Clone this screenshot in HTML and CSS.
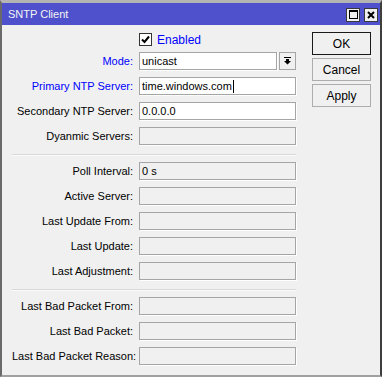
FILE: index.html
```html
<!DOCTYPE html>
<html lang="en">
<head>
  <meta charset="UTF-8" />
  <title>SNTP Client</title>
  <link rel="stylesheet" href="styles.css">
</head>
<body>
  <div class="window">
    <div class="titlebar">
      <span class="title">SNTP Client</span>
      <div class="title-buttons">
        <span class="tbtn">
          <svg width="9" height="9" viewBox="0 0 9 9"><rect x="0.5" y="0.5" width="8" height="8" fill="none" stroke="#000"/><rect x="0" y="0" width="9" height="2" fill="#000"/></svg>
        </span>
        <span class="tbtn">
          <svg width="8" height="8" viewBox="0 0 8 8"><path d="M1 1 L7 7 M7 1 L1 7" stroke="#000" stroke-width="2"/></svg>
        </span>
      </div>
    </div>

    <div class="content">
      <div class="form">
        <div class="check-row">
          <span class="checkbox">
            <svg width="11" height="11" viewBox="0 0 11 11"><path d="M2 5.5 L4.5 8 L9 2.5" fill="none" stroke="#000" stroke-width="2"/></svg>
          </span>
          <span class="check-label">Enabled</span>
        </div>

        <div class="section">
          <div class="row">
            <label class="blue">Mode:</label>
            <div class="field editable short">unicast</div>
            <span class="drop">
              <svg width="7" height="8" viewBox="0 0 7 8"><rect x="0" y="0" width="7" height="1" fill="#000"/><path d="M2 2 H5 V4 H7 L3.5 7.5 L0 4 H2 Z" fill="#000"/></svg>
            </span>
          </div>
          <div class="row">
            <label class="blue">Primary NTP Server:</label>
            <div class="field editable">time.windows.com<span class="caret"></span></div>
          </div>
          <div class="row">
            <label>Secondary NTP Server:</label>
            <div class="field editable">0.0.0.0</div>
          </div>
          <div class="row">
            <label>Dyanmic Servers:</label>
            <div class="field"></div>
          </div>
        </div>

        <div class="separator"></div>

        <div class="section">
          <div class="row"><label>Poll Interval:</label><div class="field">0 s</div></div>
          <div class="row"><label>Active Server:</label><div class="field"></div></div>
          <div class="row"><label>Last Update From:</label><div class="field"></div></div>
          <div class="row"><label>Last Update:</label><div class="field"></div></div>
          <div class="row"><label>Last Adjustment:</label><div class="field"></div></div>
        </div>

        <div class="separator"></div>

        <div class="section">
          <div class="row"><label>Last Bad Packet From:</label><div class="field"></div></div>
          <div class="row"><label>Last Bad Packet:</label><div class="field"></div></div>
          <div class="row"><label>Last Bad Packet Reason:</label><div class="field"></div></div>
        </div>
      </div>

      <div class="buttons">
        <button class="default">OK</button>
        <button>Cancel</button>
        <button>Apply</button>
      </div>
    </div>
  </div>
</body>
</html>
```

FILE: styles.css
```css
:root {
  --bg-color: #f0f0f0;
  --title-color: #4f50cc;
  --border-color: #a5a5a5;
  --label-blue: #0000ff;
}

* {
  box-sizing: border-box;
}

body {
  margin: 0;
  background-color: var(--bg-color);
  font-family: 'Liberation Sans', Arial, sans-serif;
  font-size: 11px;
  color: #000;
}

.window {
  width: 382px;
  height: 377px;
  border-top: 3px solid #b4b4b4;
  border-left: 2px solid #6a6a6a;
  border-right: 2px solid #3e3e3e;
  border-bottom: 2px solid #a0a0a0;
  background-color: var(--bg-color);
}

.titlebar {
  height: 22px;
  background-color: var(--title-color);
  display: flex;
  align-items: center;
  justify-content: space-between;
  padding: 0 2px 0 6px;
}

.title {
  color: #f4f4f4;
  font-size: 11px;
}

.title-buttons {
  display: flex;
  gap: 4px;
  margin-top: 1px;
}

.tbtn {
  width: 14px;
  height: 14px;
  background-color: var(--bg-color);
  border: 1px solid #3a3a3a;
  display: flex;
  align-items: center;
  justify-content: center;
}

.content {
  display: flex;
  gap: 16px;
}

.form {
  padding: 8px 0 0 10px;
  width: 294px;
}

.check-row {
  display: flex;
  align-items: center;
  height: 13px;
  margin-left: 127px;
  margin-bottom: 6px;
}

.checkbox {
  width: 13px;
  height: 13px;
  border: 1px solid #333;
  background-color: #fff;
  display: flex;
  align-items: center;
  justify-content: center;
}

.check-label {
  color: var(--label-blue);
  margin-left: 5px;
  font-size: 12px;
}

.section {
  display: flex;
  flex-direction: column;
  gap: 7px;
}

.row {
  display: flex;
  align-items: center;
  height: 18px;
}

.row label {
  width: 121px;
  text-align: right;
  margin-right: 6px;
  white-space: nowrap;
}

.row label.blue {
  color: var(--label-blue);
}

.field {
  width: 157px;
  height: 18px;
  line-height: 16px;
  padding: 0 2px;
  border: 1px solid var(--border-color);
  box-shadow: 1px 1px 0 #fff;
  background-color: var(--bg-color);
  white-space: nowrap;
  display: flex;
  align-items: center;
}

.field.editable {
  background-color: #fff;
}

.field.short {
  width: 138px;
}

.caret {
  display: inline-block;
  width: 1px;
  height: 13px;
  background-color: #000;
  margin-left: 1px;
}

.drop {
  width: 17px;
  height: 18px;
  margin-left: 2px;
  border: 1px solid var(--border-color);
  background-color: var(--bg-color);
  display: flex;
  align-items: center;
  justify-content: center;
}

.separator {
  width: 284px;
  height: 2px;
  margin: 9px 0 6px;
  border-top: 1px solid #d8d8d8;
  border-bottom: 1px solid #fbfbfb;
}

.buttons {
  display: flex;
  flex-direction: column;
  gap: 3px;
  padding-top: 7px;
}

button {
  width: 59px;
  height: 23px;
  padding: 0;
  border: 1px solid #adadad;
  background-color: var(--bg-color);
  font-family: inherit;
  font-size: 12px;
  color: #000;
}

button.default {
  border-color: #1a1a1a;
}
```
